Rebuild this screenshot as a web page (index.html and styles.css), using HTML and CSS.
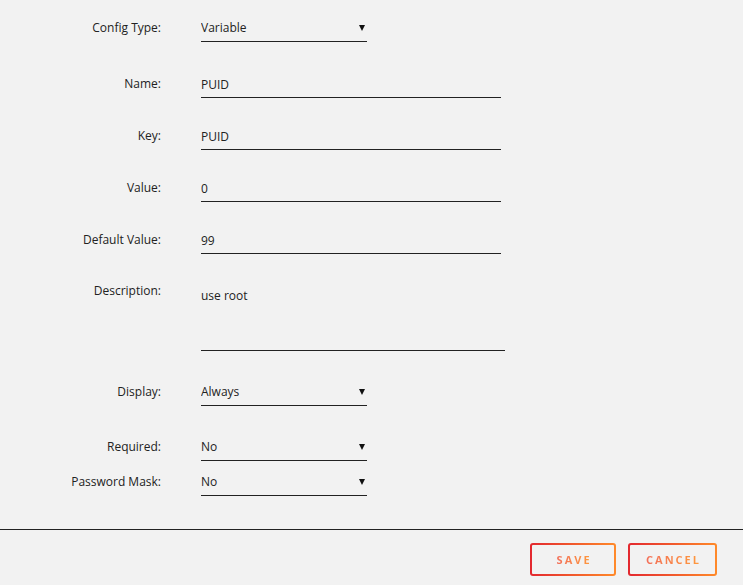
FILE: index.html
```html
<!DOCTYPE html>
<html>

<head>
  <title>Edit Config</title>
  <link rel="stylesheet" href="styles.css">
</head>

<body>
  <form class="config-form">
    <div class="row row-first">
      <label class="label">Config Type:</label>
      <div class="select-wrap">
        <select class="field">
          <option>Variable</option>
          <option>Path</option>
          <option>Port</option>
          <option>Device</option>
        </select>
      </div>
    </div>

    <div class="row">
      <label class="label">Name:</label>
      <input class="field text-field" type="text" value="PUID">
    </div>

    <div class="row">
      <label class="label">Key:</label>
      <input class="field text-field" type="text" value="PUID">
    </div>

    <div class="row">
      <label class="label">Value:</label>
      <input class="field text-field" type="text" value="0">
    </div>

    <div class="row row-snug">
      <label class="label">Default Value:</label>
      <input class="field text-field" type="text" value="99">
    </div>

    <div class="row row-wide row-top">
      <label class="label">Description:</label>
      <textarea class="field area-field">use root</textarea>
    </div>

    <div class="row row-wide">
      <label class="label">Display:</label>
      <div class="select-wrap">
        <select class="field">
          <option>Always</option>
          <option>Advanced</option>
        </select>
      </div>
    </div>

    <div class="row row-tight">
      <label class="label">Required:</label>
      <div class="select-wrap">
        <select class="field">
          <option>No</option>
          <option>Yes</option>
        </select>
      </div>
    </div>

    <div class="row">
      <label class="label">Password Mask:</label>
      <div class="select-wrap">
        <select class="field">
          <option>No</option>
          <option>Yes</option>
        </select>
      </div>
    </div>
  </form>

  <div class="footer">
    <button class="btn" type="button"><span>Save</span></button>
    <button class="btn" type="button"><span>Cancel</span></button>
  </div>
</body>

</html>
```

FILE: styles.css
```css
body {
  margin: 0;
  font-family: "Open Sans", Arial, sans-serif;
  font-size: 12px;
  color: #222;
  background-color: #f2f2f2;
}

.config-form {
  padding-top: 13px;
  height: 529px;
  box-sizing: border-box;
}

.row {
  display: flex;
  align-items: center;
  gap: 40px;
  margin-bottom: 23px;
}

.row-first {
  margin-bottom: 27px;
}

.row-snug {
  margin-bottom: 22px;
}

.row-wide {
  margin-bottom: 26px;
}

.row-tight {
  margin-bottom: 6px;
}

.row-top {
  align-items: flex-start;
}

.label {
  width: 161px;
  text-align: right;
  line-height: 16px;
}

.row-top .label {
  padding-top: 7px;
}

.field {
  display: block;
  box-sizing: border-box;
  height: 29px;
  margin: 0;
  padding: 7px 0 5px;
  border: none;
  border-bottom: 1px solid #222;
  border-radius: 0;
  background: transparent;
  font-family: inherit;
  font-size: 12px;
  line-height: 16px;
  color: #222;
  outline: none;
}

.text-field {
  width: 300px;
}

.area-field {
  width: 304px;
  height: 75px;
  padding-top: 12px;
  resize: none;
}

.select-wrap {
  position: relative;
  width: 166px;
}

.select-wrap select {
  width: 100%;
  appearance: none;
  -webkit-appearance: none;
  cursor: pointer;
}

.select-wrap::after {
  content: "";
  position: absolute;
  right: 2px;
  top: 12px;
  border-left: 3px solid transparent;
  border-right: 3px solid transparent;
  border-top: 6px solid #111;
  pointer-events: none;
}

.footer {
  display: flex;
  justify-content: flex-end;
  gap: 12px;
  padding: 13px 26px 0 0;
  border-top: 1px solid #222;
}

.btn {
  height: 33px;
  padding: 0 14px 0 16px;
  min-width: 86px;
  border: 2px solid transparent;
  border-radius: 3px;
  background: linear-gradient(#f2f2f2, #f2f2f2) padding-box,
    linear-gradient(90deg, #e3282f, #ff8a2a) border-box;
  font-family: inherit;
  font-size: 11px;
  font-weight: bold;
  letter-spacing: 2px;
  text-transform: uppercase;
  cursor: pointer;
}

.btn span {
  background: linear-gradient(90deg, #f3705a, #ff9a3c);
  -webkit-background-clip: text;
  background-clip: text;
  color: transparent;
}
```
